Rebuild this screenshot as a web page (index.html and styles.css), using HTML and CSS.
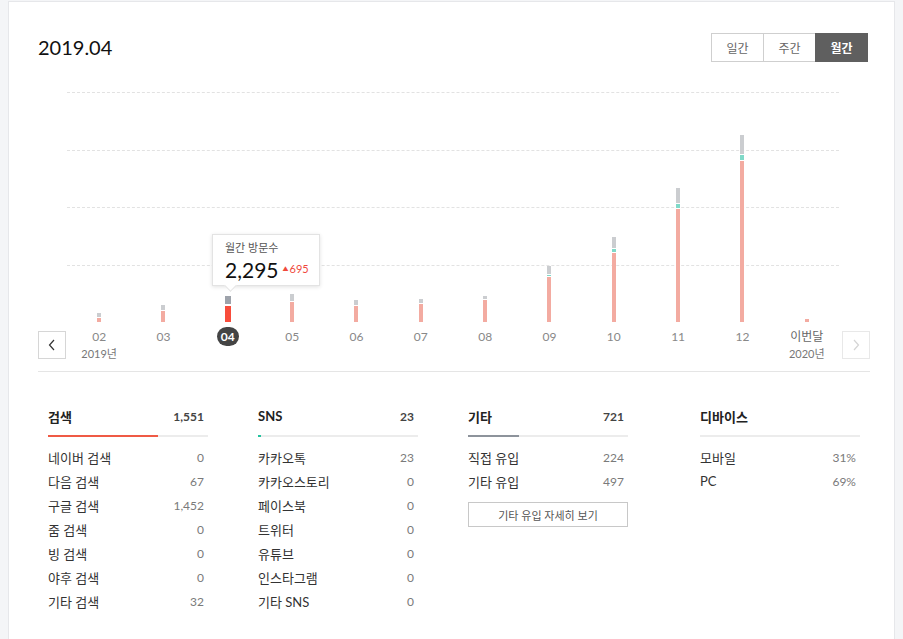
FILE: index.html
```html
<!DOCTYPE html>
<html lang="ko">
<head>
    <meta charset="UTF-8">
    <title>방문 통계</title>
    <link rel="stylesheet" href="styles.css">
</head>
<body>
    <div class="card">
        <div class="head">
            <h2 class="period">2019.04</h2>
            <div class="tabs">
                <button type="button" class="tab">일간</button>
                <button type="button" class="tab">주간</button>
                <button type="button" class="tab active">월간</button>
            </div>
        </div>

        <div class="chart">
            <div></div>
            <div class="plot">
                <div class="grid">
                    <div class="gline"></div>
                    <div class="gline"></div>
                    <div class="gline"></div>
                    <div class="gline"></div>
                </div>
                <div class="bars">
                    <div class="col"><div class="bar"><i class="seg gray" style="height:4px"></i><i class="seg pink" style="height:4px"></i></div></div>
                    <div class="col"><div class="bar"><i class="seg gray" style="height:5px"></i><i class="seg pink" style="height:11px"></i></div></div>
                    <div class="col"><div class="bar sel"><i class="seg gray" style="height:8px"></i><i class="seg red" style="height:16px"></i></div></div>
                    <div class="col"><div class="bar"><i class="seg gray" style="height:7px"></i><i class="seg pink" style="height:20px"></i></div></div>
                    <div class="col"><div class="bar"><i class="seg gray" style="height:5px"></i><i class="seg pink" style="height:16px"></i></div></div>
                    <div class="col"><div class="bar"><i class="seg gray" style="height:4px"></i><i class="seg pink" style="height:18px"></i></div></div>
                    <div class="col"><div class="bar"><i class="seg gray" style="height:3px"></i><i class="seg pink" style="height:22px"></i></div></div>
                    <div class="col"><div class="bar"><i class="seg gray" style="height:8px"></i><i class="seg teal" style="height:1px"></i><i class="seg pink" style="height:45px"></i></div></div>
                    <div class="col"><div class="bar"><i class="seg gray" style="height:11px"></i><i class="seg teal" style="height:3px"></i><i class="seg pink" style="height:69px"></i></div></div>
                    <div class="col"><div class="bar"><i class="seg gray" style="height:15px"></i><i class="seg teal" style="height:4px"></i><i class="seg pink" style="height:113px"></i></div></div>
                    <div class="col"><div class="bar"><i class="seg gray" style="height:19px"></i><i class="seg teal" style="height:5px"></i><i class="seg pink" style="height:161px"></i></div></div>
                    <div class="col"><div class="bar"><i class="seg pink" style="height:3px"></i></div></div>
                </div>
                <div class="tooltip">
                    <div class="tip-title">월간 방문수</div>
                    <div class="tip-value">2,295<span class="tip-diff"><span class="tri">▲</span>695</span></div>
                </div>
            </div>
            <div></div>

            <div class="nav-cell">
                <button type="button" class="nav">
                    <svg width="8" height="12" viewBox="0 0 8 12"><polyline points="6,1 1.5,6 6,11" fill="none" stroke="#333" stroke-width="1.2"/></svg>
                </button>
            </div>
            <div class="labels">
                <div class="lbl"><span class="m">02</span><span class="y">2019년</span></div>
                <div class="lbl"><span class="m">03</span></div>
                <div class="lbl"><span class="m on">04</span></div>
                <div class="lbl"><span class="m">05</span></div>
                <div class="lbl"><span class="m">06</span></div>
                <div class="lbl"><span class="m">07</span></div>
                <div class="lbl"><span class="m">08</span></div>
                <div class="lbl"><span class="m">09</span></div>
                <div class="lbl"><span class="m">10</span></div>
                <div class="lbl"><span class="m">11</span></div>
                <div class="lbl"><span class="m">12</span></div>
                <div class="lbl"><span class="m now">이번달</span><span class="y">2020년</span></div>
            </div>
            <div class="nav-cell right">
                <button type="button" class="nav off">
                    <svg width="8" height="12" viewBox="0 0 8 12"><polyline points="2,1 6.5,6 2,11" fill="none" stroke="#d4d4d4" stroke-width="1.2"/></svg>
                </button>
            </div>
        </div>

        <div class="stats">
            <div class="group">
                <div class="g-head"><span class="g-name">검색</span><span class="g-total">1,551</span></div>
                <div class="track"><div class="fill red" style="width:69%"></div></div>
                <div class="row"><span>네이버 검색</span><span class="num">0</span></div>
                <div class="row"><span>다음 검색</span><span class="num">67</span></div>
                <div class="row"><span>구글 검색</span><span class="num">1,452</span></div>
                <div class="row"><span>줌 검색</span><span class="num">0</span></div>
                <div class="row"><span>빙 검색</span><span class="num">0</span></div>
                <div class="row"><span>야후 검색</span><span class="num">0</span></div>
                <div class="row"><span>기타 검색</span><span class="num">32</span></div>
            </div>
            <div class="group">
                <div class="g-head"><span class="g-name">SNS</span><span class="g-total">23</span></div>
                <div class="track"><div class="fill green" style="width:2%"></div></div>
                <div class="row"><span>카카오톡</span><span class="num">23</span></div>
                <div class="row"><span>카카오스토리</span><span class="num">0</span></div>
                <div class="row"><span>페이스북</span><span class="num">0</span></div>
                <div class="row"><span>트위터</span><span class="num">0</span></div>
                <div class="row"><span>유튜브</span><span class="num">0</span></div>
                <div class="row"><span>인스타그램</span><span class="num">0</span></div>
                <div class="row"><span>기타 SNS</span><span class="num">0</span></div>
            </div>
            <div class="group">
                <div class="g-head"><span class="g-name">기타</span><span class="g-total">721</span></div>
                <div class="track"><div class="fill gray" style="width:32%"></div></div>
                <div class="row"><span>직접 유입</span><span class="num">224</span></div>
                <div class="row"><span>기타 유입</span><span class="num">497</span></div>
                <button type="button" class="more">기타 유입 자세히 보기</button>
            </div>
            <div class="group device">
                <div class="g-head"><span class="g-name">디바이스</span></div>
                <div class="track"></div>
                <div class="row"><span>모바일</span><span class="num">31%</span></div>
                <div class="row"><span>PC</span><span class="num">69%</span></div>
            </div>
        </div>
    </div>
</body>
</html>
```

FILE: styles.css
```css
body {
    margin: 0;
    padding: 1px 8px 0 8px;
    background: #f4f5f7;
    font-family: Lato, "Noto Sans CJK KR", sans-serif;
    color: #222;
    overflow: hidden;
}
.card {
    background: #fff;
    border: 1px solid #e6e7ea;
    padding: 31px 24px 60px 29px;
}
.head {
    display: flex;
    justify-content: space-between;
    align-items: center;
    height: 29px;
}
.period {
    margin: 0;
    font-size: 20px;
    font-weight: normal;
    color: #111;
    line-height: 29px;
}
.tabs {
    display: flex;
    margin-right: 2px;
}
.tab {
    width: 53px;
    height: 29px;
    border: 1px solid #cfcfcf;
    margin-left: -1px;
    background: #fff;
    color: #666;
    font-family: inherit;
    font-size: 12px;
    padding: 0;
    cursor: pointer;
}
.tab.active {
    background: #5f5f5f;
    border-color: #5f5f5f;
    color: #fff;
    font-weight: bold;
}

/* chart */
.chart {
    display: grid;
    grid-template-columns: 29px 772px 31px;
    grid-template-rows: 230px 49px;
    margin-top: 30px;
    border-bottom: 1px solid #e5e5e5;
}
.plot {
    position: relative;
}
.grid {
    position: absolute;
    inset: 0;
    display: flex;
    flex-direction: column;
}
.gline {
    height: 57.5px;
    border-top: 1px dashed #e2e2e2;
    box-sizing: border-box;
}
.bars {
    position: relative;
    display: flex;
    height: 100%;
}
.col {
    flex: 1;
    display: flex;
    justify-content: center;
    align-items: flex-end;
}
.bar {
    width: 4px;
    display: flex;
    flex-direction: column;
    gap: 1px;
}
.bar.sel {
    width: 6px;
    gap: 2px;
}
.seg {
    display: block;
}
.seg.gray { background: #cbcdd0; }
.seg.teal { background: #80d9c8; }
.seg.pink { background: #f3aba1; }
.seg.red { background: #f84c3b; }
.bar.sel .seg.gray { background: #9ea3ab; }

.tooltip {
    position: absolute;
    left: 145px;
    top: 142px;
    width: 108px;
    height: 52px;
    box-sizing: border-box;
    padding: 6px 12px 0;
    background: #fff;
    border: 1px solid #e3e3e3;
    box-shadow: 0 1px 4px rgba(0, 0, 0, 0.12);
}
.tooltip::after {
    content: "";
    position: absolute;
    left: 13px;
    bottom: -5px;
    width: 8px;
    height: 8px;
    background: #fff;
    border-right: 1px solid #e3e3e3;
    border-bottom: 1px solid #e3e3e3;
    transform: rotate(45deg);
}
.tip-title {
    font-size: 11px;
    line-height: 14px;
    color: #555;
}
.tip-value {
    font-size: 21px;
    line-height: 24px;
    color: #111;
    margin-top: 2px;
}
.tip-diff {
    font-size: 11px;
    color: #f0493c;
    margin-left: 4px;
    vertical-align: 5px;
}
.tri {
    font-size: 6px;
    vertical-align: 2px;
    margin-right: 1px;
}

.nav-cell {
    padding-top: 9px;
}
.nav-cell.right {
    display: flex;
    justify-content: flex-end;
}
.nav {
    width: 28px;
    height: 28px;
    padding: 0;
    background: #fff;
    border: 1px solid #d6d6d6;
    display: flex;
    align-items: center;
    justify-content: center;
    cursor: pointer;
}
.nav.off {
    border-color: #e8e8e8;
    cursor: default;
}
.labels {
    display: flex;
}
.lbl {
    flex: 1;
    display: flex;
    flex-direction: column;
    align-items: center;
    padding-top: 5px;
}
.lbl .m {
    height: 19px;
    line-height: 19px;
    padding: 0 4px;
    border-radius: 10px;
    font-size: 12px;
    color: #888;
}
.lbl .m.on {
    background: #444;
    color: #fff;
    font-weight: bold;
}
.lbl .m.now {
    color: #666;
}
.lbl .y {
    font-size: 11px;
    line-height: 16px;
    color: #777;
}

/* stats */
.stats {
    display: flex;
    gap: 50px;
    padding: 34px 0 0 10px;
}
.group {
    width: 160px;
}
.group.device {
    margin-left: 22px;
}
.g-head {
    display: flex;
    justify-content: space-between;
    align-items: center;
    height: 20px;
    padding-right: 4px;
}
.g-name {
    font-size: 13px;
    font-weight: bold;
    color: #222;
}
.g-total {
    font-size: 12px;
    font-weight: bold;
    color: #444;
}
.track {
    height: 2px;
    background: #ececec;
    margin: 9px 0 8px;
}
.fill {
    height: 100%;
}
.fill.red { background: #ef5a45; }
.fill.green { background: #22c29e; }
.fill.gray { background: #8d939b; }
.row {
    display: flex;
    justify-content: space-between;
    align-items: center;
    height: 24px;
    padding-right: 4px;
    font-size: 13px;
    color: #333;
}
.num {
    font-size: 12px;
    color: #7a7a7a;
}
.more {
    display: block;
    width: 160px;
    height: 25px;
    margin-top: 9px;
    padding: 0;
    background: #fff;
    border: 1px solid #c8c8c8;
    font-family: inherit;
    font-size: 11px;
    color: #555;
    cursor: pointer;
}
```
